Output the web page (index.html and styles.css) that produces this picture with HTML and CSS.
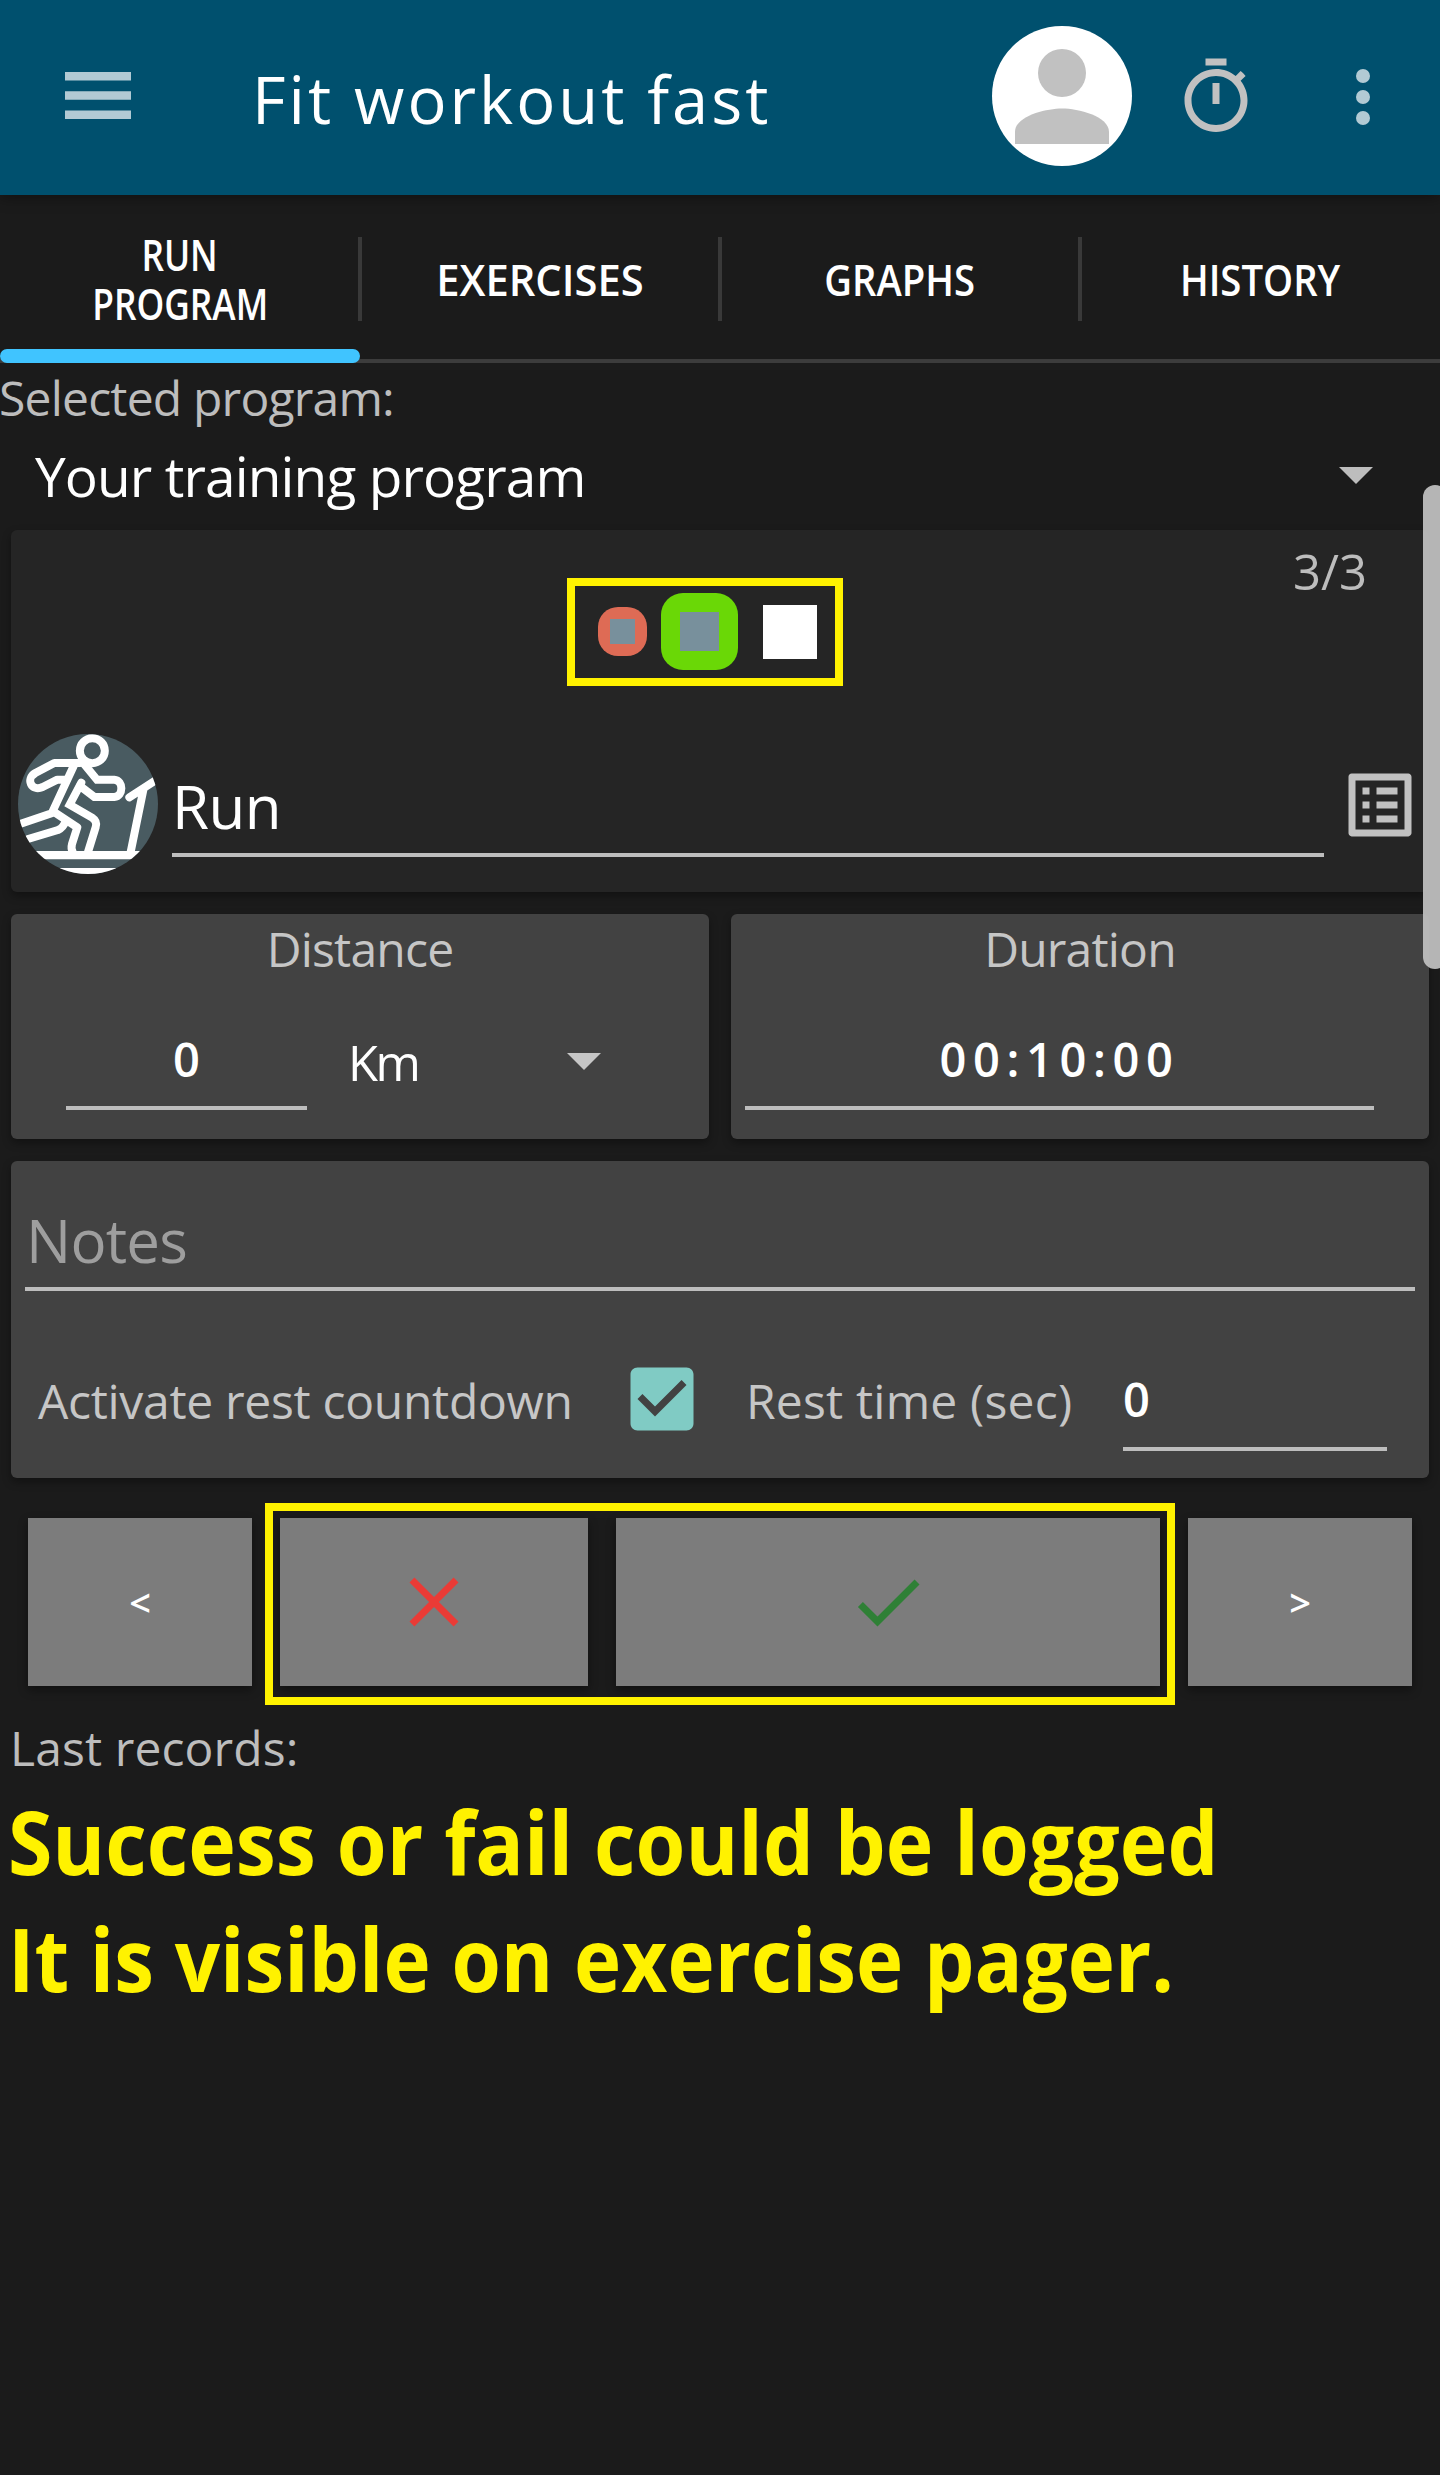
FILE: index.html
```html
<!DOCTYPE html>
<html lang="en">
<head>
<meta charset="utf-8">
<title>Fit workout fast</title>
<link rel="stylesheet" href="styles.css">
</head>
<body>
<header class="appbar">
  <svg class="menu" viewBox="0 0 66 47"><path d="M0 0h66v8.500H0zM0 19.200h66v8.500H0zM0 38.400h66v8.500H0z"/></svg>
  <h1 class="title">Fit workout fast</h1>
  <svg class="profile" viewBox="0 0 140 140"><circle cx="70" cy="70" r="70" fill="#fff"/><circle cx="70" cy="47" r="24" fill="#c1c1c1"/><path d="M23 118V106C23 90 54 82.500 70 82.500S117 90 117 106V118Z" fill="#c1c1c1"/></svg>
  <svg class="timer" viewBox="0 0 24 24"><path d="M15 1H9v2h6V1zm-4 13h2V8h-2v6zm8.030-6.610l1.420-1.420c-.43-.51-.9-.99-1.410-1.410l-1.420 1.420C16.070 4.740 14.120 4 12 4c-4.970 0-9 4.030-9 9s4.020 9 9 9 9-4.030 9-9c0-2.120-.74-4.070-1.970-5.610zM12 20c-3.870 0-7-3.130-7-7s3.130-7 7-7 7 3.130 7 7-3.130 7-7 7z"/></svg>
  <svg class="more" viewBox="0 0 14 56"><circle cx="7" cy="7" r="7"/><circle cx="7" cy="28" r="7"/><circle cx="7" cy="49" r="7"/></svg>
</header>

<nav class="tabs">
  <a class="tab tab-active"><span class="tab-text narrow">RUN</span><span class="tab-text narrow">PROGRAM</span></a>
  <a class="tab"><span class="tab-text">EXERCISES</span></a>
  <a class="tab"><span class="tab-text tight">GRAPHS</span></a>
  <a class="tab"><span class="tab-text tight">HISTORY</span></a>
</nav>

<main>
  <div class="label program-label">Selected program:</div>
  <div class="program"><span>Your training program</span><i class="caret"></i></div>

  <section class="card exercise">
    <div class="pager-row">
      <div class="pager">
        <i class="dot dot-fail"></i>
        <i class="dot dot-success"></i>
        <i class="dot dot-open"></i>
      </div>
      <span class="counter">3/3</span>
    </div>
    <div class="exercise-row">
      <svg class="run-icon" viewBox="54 42 420 420">
        <defs><clipPath id="disc"><circle cx="264" cy="252" r="210"/></clipPath></defs>
        <g clip-path="url(#disc)">
          <rect x="54" y="42" width="420" height="420" fill="#495b61"/>
          <g fill="none" stroke="#fff" stroke-width="24" stroke-linejoin="round" stroke-linecap="round">
            <circle cx="277" cy="92" r="37.500"/>
            <path d="M240 129H163L106 159C76 177 94 216 128 201L172 179H194"/>
            <path d="M221 138L155 280L60 312"/>
            <path d="M254 134L291 179H343C371 181 371 229 343 231H283L240 198" stroke-linejoin="miter"/>
            <path d="M244 188L209 254L276 293Q293 304 287 322L264 396" stroke-linejoin="miter"/>
            <path d="M165 278L232 322L216 372Q212 386 219 398"/>
            <path d="M84 357L174 330Q190 323 197 303"/>
            <path d="M388 232L470 179M430 210L392 396"/>
          </g>
          <path d="M54 393H474V418H54zM54 444H474V462H54z" fill="#fff"/>
        </g>
      </svg>
      <div class="field exercise-name">Run</div>
      <svg class="list" viewBox="0 0 24 24"><path d="M19 5v14H5V5h14m1.100-2H3.900c-.5 0-.9.4-.9.9v16.200c0 .4.4.9.9.9h16.200c.4 0 .9-.5.9-.9V3.900c0-.5-.5-.9-.9-.9zM11 7h6v2h-6V7zm0 4h6v2h-6v-2zm0 4h6v2h-6zM7 7h2v2H7zm0 4h2v2H7zm0 4h2v2H7z"/></svg>
    </div>
  </section>

  <div class="metrics">
    <section class="card metric">
      <div class="label metric-label">Distance</div>
      <div class="distance">
        <div class="field value">0</div>
        <div class="unit"><span>Km</span><i class="caret"></i></div>
      </div>
    </section>
    <section class="card metric">
      <div class="label metric-label">Duration</div>
      <div class="duration"><div class="field value">00:10:00</div></div>
    </section>
  </div>

  <section class="card notes-card">
    <div class="field notes">Notes</div>
    <div class="rest">
      <span class="label rest-toggle">Activate rest countdown</span>
      <svg class="check" viewBox="0 0 24 24"><path d="M19 3H5c-1.110 0-2 .9-2 2v14c0 1.100.89 2 2 2h14c1.110 0 2-.9 2-2V5c0-1.100-.89-2-2-2zm-9 14l-5-5 1.410-1.410L10 14.170l7.590-7.590L19 8l-9 9z"/></svg>
      <span class="label rest-label">Rest time (sec)</span>
      <div class="field rest-value">0</div>
    </div>
  </section>

  <div class="actions">
    <button class="btn btn-nav">&lt;</button>
    <div class="verdict">
      <button class="btn btn-fail"><svg viewBox="0 0 24 24"><path fill="#ea3b36" d="M19 6.410L17.590 5 12 10.590 6.410 5 5 6.410 10.590 12 5 17.590 6.410 19 12 13.410 17.590 19 19 17.590 13.410 12z"/></svg></button>
      <button class="btn btn-success"><svg viewBox="0 0 24 24"><path fill="#2f8036" d="M9 16.170L4.830 12l-1.420 1.410L9 19 21 7l-1.410-1.410z"/></svg></button>
      <i class="highlight"></i>
    </div>
    <button class="btn btn-nav">&gt;</button>
  </div>

  <div class="label records">Last records:</div>
  <div class="caption">
    <p class="line">Success or fail could be logged</p>
    <p class="line line-last">It is visible on exercise pager.</p>
  </div>
</main>
<i class="scrollbar"></i>
</body>
</html>
```
FILE: styles.css
```css
* { box-sizing: border-box; }
body {
  margin: 0;
  position: relative;
  width: 1440px;
  height: 2475px;
  overflow: hidden;
  background: #1b1b1b;
  color: #fff;
  font-family: "Open Sans", sans-serif;
  white-space: nowrap;
}
svg { display: block; flex: none; }
i { display: block; flex: none; }

.appbar {
  position: relative;
  display: flex;
  align-items: flex-start;
  height: 195px;
  padding-left: 65px;
  background: #00506e;
  box-shadow: 0 2px 14px rgba(0, 0, 0, .4);
}
.menu { width: 66px; height: 47px; margin-top: 72px; fill: #b2cad4; }
.title {
  width: 740px;
  margin: 0 0 0 121px;
  font-size: 65px;
  font-weight: 500;
  line-height: 199px;
  letter-spacing: 3px;
}
.profile { width: 140px; height: 140px; margin-top: 26px; }
.timer { width: 84px; height: 84px; margin: 55px 0 0 42px; fill: #c1c1c1; }
.more { width: 14px; height: 56px; margin: 69px 0 0 98px; fill: #b2cad4; }

.tabs {
  display: grid;
  grid-template-columns: repeat(4, 360px);
  height: 168px;
  border-bottom: 4px solid #3c3c3c;
}
.tab {
  position: relative;
  display: flex;
  flex-direction: column;
  align-items: center;
  justify-content: center;
  padding-top: 4px;
  font-size: 43px;
  font-weight: 600;
  line-height: 49px;
}
.tab-text { transform: scaleX(.97); }
.tab-text.tight { transform: scaleX(.89); }
.tab-text.narrow { transform: scaleX(.82); }
.tab + .tab::before {
  content: "";
  position: absolute;
  left: -2px;
  top: 42px;
  width: 4px;
  height: 84px;
  background: #393939;
}
.tab-active::after {
  content: "";
  position: absolute;
  left: 0;
  bottom: -4px;
  width: 360px;
  height: 14px;
  border-radius: 7px;
  background: #40c4ff;
}

.label { color: #bdbdbd; font-size: 48px; letter-spacing: -.8px; }
.program-label { line-height: 69px; text-indent: -1px; }
.program {
  display: flex;
  align-items: center;
  justify-content: space-between;
  height: 87px;
  padding: 0 67px 0 35px;
  font-size: 55px;
  font-weight: 500;
  letter-spacing: -.9px;
}
.caret {
  width: 34px;
  height: 17px;
  background: #bdbdbd;
  clip-path: polygon(0 0, 100% 0, 50% 100%);
}

.card {
  border-radius: 6px;
  background: #424242;
  box-shadow: 0 4px 9px rgba(0, 0, 0, .35);
}
.field { border-bottom: 4px solid #bdbdbd; }

.exercise { height: 362px; margin: 11px 11px 0; background: #252525; }
.pager-row { display: flex; align-items: flex-start; height: 156px; padding-right: 62px; }
.pager {
  display: flex;
  align-items: center;
  width: 276px;
  height: 108px;
  margin: 48px 0 0 556px;
  border: 8px solid #fff200;
  padding: 0 0 1px 23px;
}
.dot-fail {
  width: 49px;
  height: 49px;
  border-radius: 20px;
  background: linear-gradient(#78909c, #78909c) center / 25px 25px no-repeat #de6b55;
}
.dot-success {
  width: 77px;
  height: 77px;
  margin-left: 14px;
  border-radius: 22px;
  background: linear-gradient(#78909c, #78909c) center / 39px 39px no-repeat #6ad806;
}
.dot-open { width: 54px; height: 54px; margin-left: 25px; background: #fff; }
.counter { margin-left: auto; color: #bdbdbd; font-size: 49px; line-height: 83px; }
.exercise-row { display: flex; align-items: flex-start; padding: 48px 0 0 7px; }
.run-icon { width: 140px; height: 140px; }
.exercise-name {
  width: 1152px;
  height: 123px;
  margin: 0 14px;
  padding-top: 25px;
  font-size: 60px;
  font-weight: 500;
  line-height: 95px;
  letter-spacing: -.6px;
}
.list { width: 84px; height: 84px; margin-top: 29px; fill: #c1c1c1; }

.metrics { display: grid; grid-template-columns: 1fr 1fr; gap: 22px; margin: 22px 11px 0; }
.metric { height: 225px; }
.metric .caret { background: #c6c6c6; }
.notes-card .label, .metric-label { color: #c6c6c6; }
.metric-label { height: 66px; line-height: 69px; text-align: center; }
.distance { display: flex; align-items: flex-start; padding-left: 55px; }
.duration { padding-left: 14px; }
.value {
  width: 241px;
  height: 130px;
  padding-top: 32px;
  font-size: 47px;
  font-weight: 600;
  line-height: 94px;
  text-align: center;
}
.duration .value { width: 629px; letter-spacing: 6.6px; }
.unit {
  display: flex;
  align-items: center;
  justify-content: space-between;
  width: 253px;
  height: 131px;
  margin: 16px 0 0 41px;
  font-size: 49px;
  font-weight: 500;
  letter-spacing: -2.4px;
}

.notes-card { height: 317px; margin: 22px 11px 0; }
.notes {
  height: 130px;
  margin: 0 14px;
  padding-top: 32px;
  color: #9e9e9e;
  font-size: 60px;
  line-height: 95px;
  letter-spacing: -.8px;
  text-indent: 1px;
}
.rest { display: flex; align-items: flex-start; padding: 66px 0 0 28px; line-height: 84px; }
.rest .label { line-height: 87px; letter-spacing: -.3px; }
.rest-toggle { width: 581px; text-indent: -1px; }
.check { width: 84px; height: 84px; fill: #80cbc4; }
.rest .rest-label { width: 379px; margin-left: 40px; text-indent: 2px; letter-spacing: .2px; }
.rest-value { width: 264px; height: 94px; font-size: 47px; font-weight: 600; line-height: 84px; }

.actions { display: flex; gap: 28px; margin: 40px 28px 0; }
.btn {
  display: flex;
  align-items: center;
  justify-content: center;
  height: 168px;
  padding: 0;
  border: 0;
  background: #7c7c7c;
  color: #fff;
  font: 600 38px "Open Sans", sans-serif;
  box-shadow: 0 4px 9px rgba(0, 0, 0, .4);
}
.btn svg { width: 84px; height: 84px; }
.btn-nav { width: 224px; }
.verdict { position: relative; display: flex; gap: 28px; }
.btn-fail { width: 308px; }
.btn-success { width: 544px; }
.highlight { position: absolute; inset: -15px -15px -19px; border: 8px solid #fff200; }

.records { margin-top: 29px; padding-left: 10px; line-height: 66px; letter-spacing: .1px; }
.caption {
  margin: 2px 0 0 8px;
  color: #fff200;
  font-size: 87px;
  font-weight: 700;
  line-height: 117px;
}
.line { margin: 0; transform: scaleX(.926); transform-origin: left; }
.line-last { transform: scaleX(.918); }

.scrollbar {
  position: absolute;
  left: 1423px;
  top: 485px;
  width: 24px;
  height: 484px;
  border-radius: 12px;
  background: rgba(190, 190, 190, .95);
}
```
